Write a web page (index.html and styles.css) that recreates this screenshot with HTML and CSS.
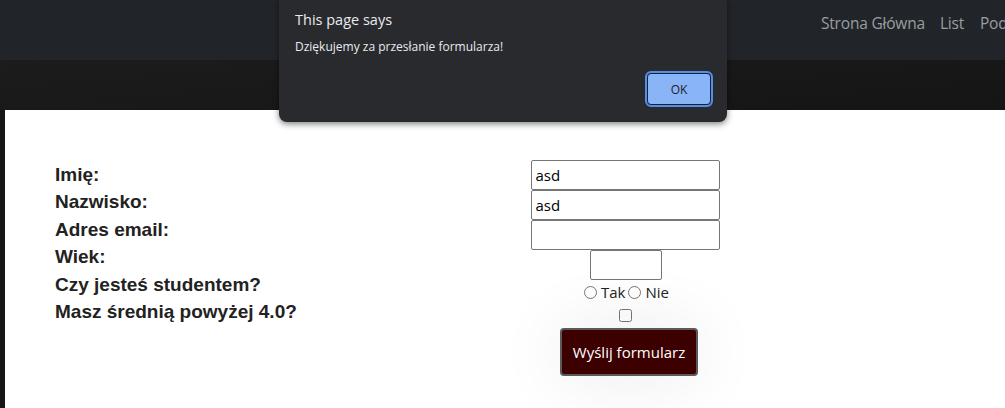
FILE: index.html
```html
<!DOCTYPE html>
<html lang="pl">
<head>
<meta charset="utf-8">
<title>Formularz</title>
<link rel="stylesheet" href="styles.css">
</head>
<body>
<nav class="navbar">
  <ul class="nav-links">
    <li><a href="#">Strona Główna</a></li>
    <li><a href="#">List</a></li>
    <li><a href="#">Podziękowania</a></li>
  </ul>
</nav>
<div class="band"></div>
<main class="content">
  <form class="form">
    <div class="labels">
      <label>Imię:</label>
      <label>Nazwisko:</label>
      <label>Adres email:</label>
      <label>Wiek:</label>
      <label>Czy jesteś studentem?</label>
      <label>Masz średnią powyżej 4.0?</label>
    </div>
    <div class="fields">
      <input class="text" type="text" value="asd">
      <input class="text" type="text" value="asd">
      <input class="text" type="email" value="">
      <input class="age" type="text" value="">
      <div class="radios">
        <input type="radio" name="s"><span>Tak</span>
        <input type="radio" name="s"><span>Nie</span>
      </div>
      <input class="check" type="checkbox">
      <button class="submit" type="button">Wyślij formularz</button>
    </div>
  </form>
</main>
<div class="dialog">
  <div class="dialog-title">This page says</div>
  <div class="dialog-msg">Dziękujemy za przesłanie formularza!</div>
  <div class="dialog-actions"><button class="ok" type="button">OK</button></div>
</div>
</body>
</html>
```
FILE: styles.css
```css
html, body {
  margin: 0;
  padding: 0;
  height: 100%;
  overflow: hidden;
}
body {
  background: #161616;
  font-family: "Open Sans", "Noto Sans", sans-serif;
  position: relative;
}
.navbar {
  height: 60px;
  background: #212529;
  display: flex;
  align-items: flex-start;
  overflow: hidden;
  box-sizing: border-box;
  padding-top: 12px;
}
.nav-links {
  list-style: none;
  margin: 0 0 0 821px;
  padding: 0;
  display: flex;
  gap: 15px;
  white-space: nowrap;
  flex-shrink: 0;
}
.nav-links li:last-child { margin-left: 1px; }
.nav-links a {
  color: #9a9da1;
  text-decoration: none;
  font-size: 15.5px;
  letter-spacing: -0.2px;
}
.band {
  height: 50px;
  background: linear-gradient(175deg, #1c1c1c, #151515);
}
.content {
  margin-left: 5px;
  background: #fff;
  height: 298px;
  padding-top: 50px;
  box-sizing: border-box;
}
.form {
  display: flex;
}
.labels {
  width: 450px;
  padding-left: 50px;
  padding-top: 1px;
  display: flex;
  flex-direction: column;
  font-family: "Liberation Sans", Arial, sans-serif;
  font-weight: bold;
  font-size: 19px;
  line-height: 27.4px;
  color: #222;
}
.fields {
  width: 240px;
  display: flex;
  flex-direction: column;
  align-items: center;
}
.fields input.text,
.fields input.age {
  box-sizing: border-box;
  height: 30px;
  border: 1px solid #767676;
  border-radius: 2px;
  font-family: "Open Sans", "Noto Sans", sans-serif;
  font-size: 15px;
  padding: 0 4px;
  margin: 0;
  color: #000;
}
.fields input.text { width: 189px; }
.fields input.age { width: 72px; margin-left: 2px; }
.radios {
  display: flex;
  align-items: center;
  font-size: 15px;
  height: 24px;
  color: #222;
}
.radios input {
  margin: 0 4px 0 3px;
  width: 13px;
  height: 13px;
}
.check {
  margin: 5px 0 6px;
  width: 13px;
  height: 13px;
}
.submit {
  background: #3d0000;
  color: #fff;
  border: 2px solid #5a5a5a;
  border-radius: 4px;
  font-family: "Open Sans", "Noto Sans", sans-serif;
  font-size: 15px;
  padding: 0 10px;
  height: 48px;
  width: 138px;
  margin-left: 8px;
  box-shadow: 0 0 70px rgba(0,0,0,0.09);
}
.dialog {
  position: absolute;
  left: 279px;
  top: 0;
  width: 448px;
  height: 122px;
  background: #292a2d;
  border-radius: 0 0 8px 8px;
  box-shadow: 0 2px 6px rgba(0,0,0,0.5);
  box-sizing: border-box;
  padding: 10px 16px 0 16px;
  color: #e8eaed;
}
.dialog-title {
  font-size: 14.5px;
  line-height: 20px;
}
.dialog-msg {
  font-size: 12px;
  margin-top: 8px;
  line-height: 18px;
}
.dialog-actions {
  display: flex;
  justify-content: flex-end;
  margin-top: 17px;
}
.ok {
  width: 64px;
  height: 32px;
  background: #8ab4f8;
  border: 1px solid #202124;
  outline: 2px solid #4f8ff0;
  border-radius: 4px;
  color: #202124;
  font-family: "Open Sans", "Noto Sans", sans-serif;
  font-size: 12px;
  margin-right: 0;
}
```
